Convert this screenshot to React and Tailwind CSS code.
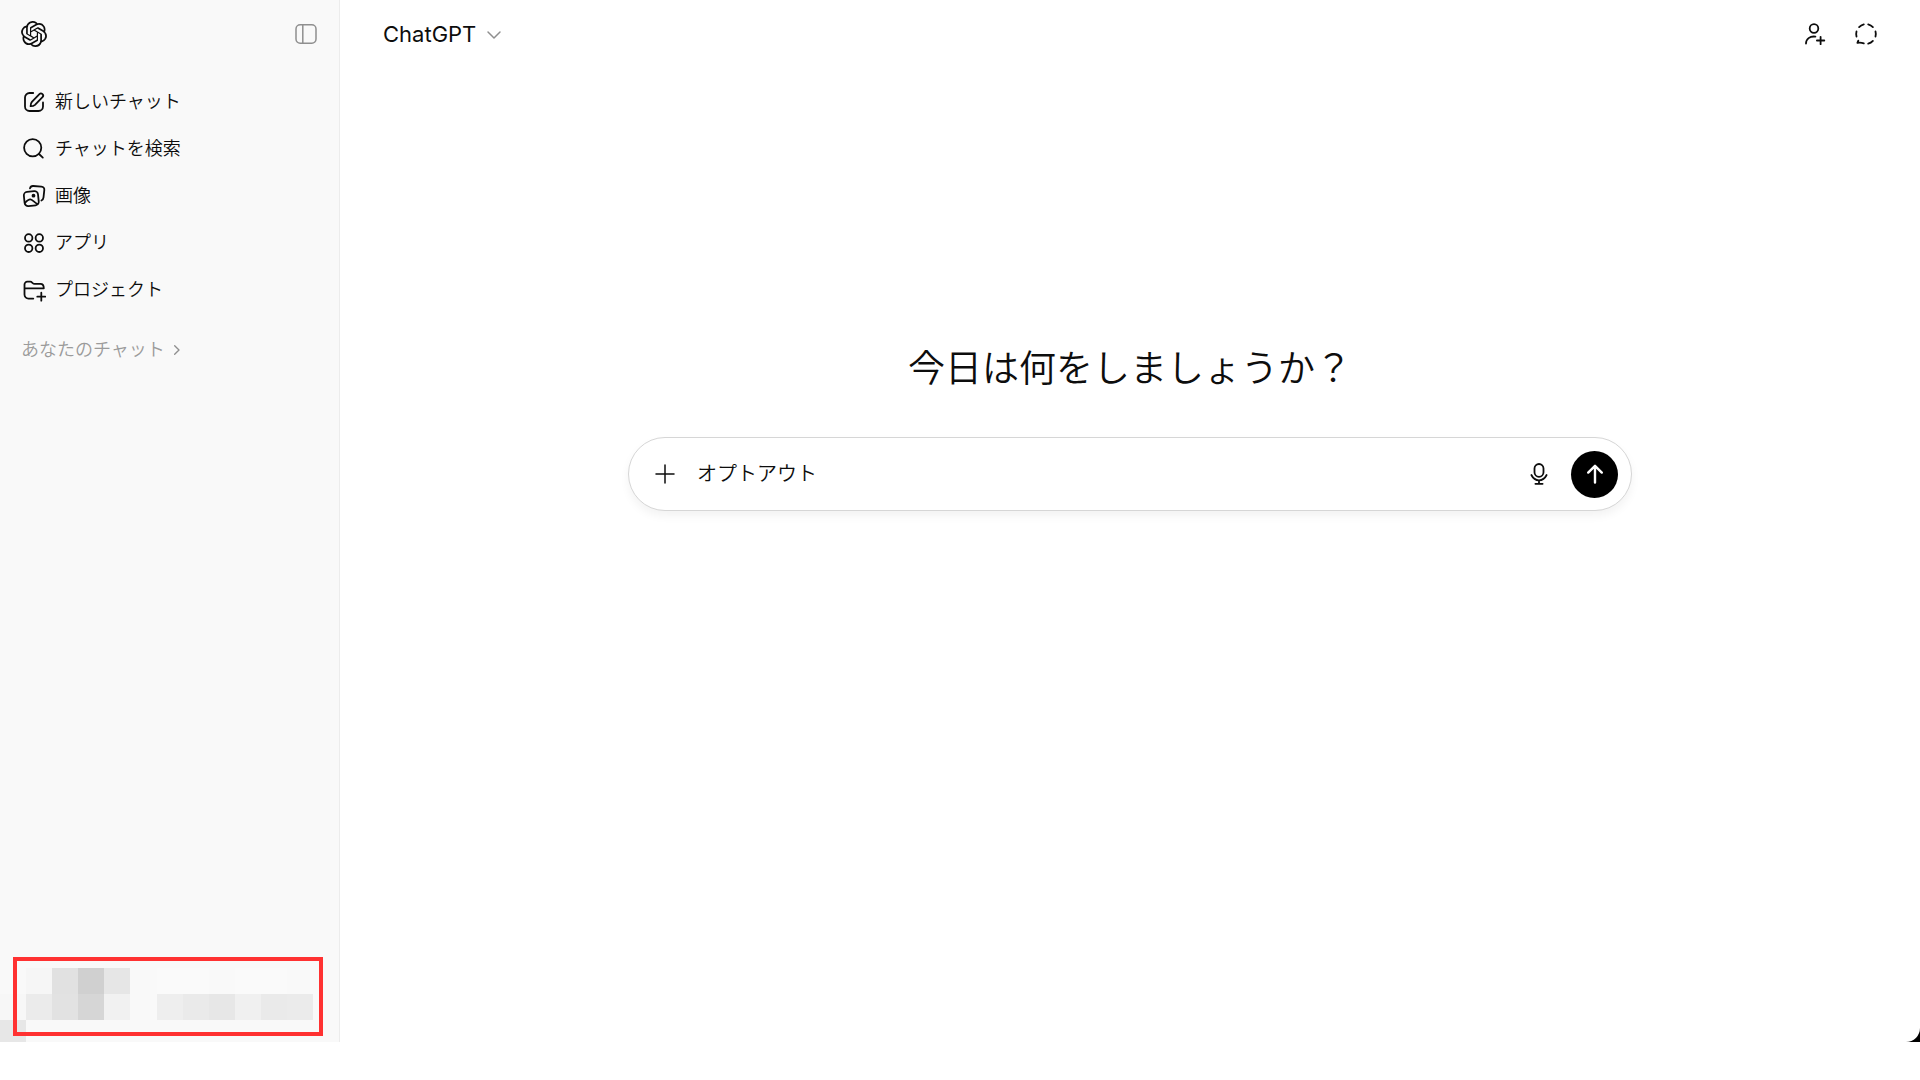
import React, { useState } from 'react';
import { SiOpenai } from 'react-icons/si';

const Icon = ({ children, className = 'size-6', strokeWidth = 1.8 }) => (
  <svg viewBox="0 0 24 24" className={`shrink-0 ${className}`} fill="none" stroke="currentColor" strokeWidth={strokeWidth} strokeLinecap="round" strokeLinejoin="round" aria-hidden="true">
    {children}
  </svg>
);

const navItems = [
  {
    label: '新しいチャット',
    icon: (
      <>
        <path d="M11.2 3H7.5A4.5 4.5 0 0 0 3 7.5V16.5A4.5 4.5 0 0 0 7.5 21H16.5A4.5 4.5 0 0 0 21 16.5V12.5" />
        <path d="M9.9 11.8 17.4 4.2A2.1 2.1 0 0 1 20.5 7.2L13 14.8C12 15.7 10.4 16.2 8.6 16.2C8.6 14.4 9 12.8 9.9 11.8Z" />
      </>
    )
  },
  {
    label: 'チャットを検索',
    icon: (
      <>
        <circle cx="10.7" cy="10.7" r="8.6" />
        <path d="M17 17 20.8 20.6" />
      </>
    )
  },
  {
    label: '画像',
    icon: (
      <>
        <rect x="2.2" y="7.5" width="14.2" height="14.2" rx="3.5" transform="rotate(-6 9.3 14.6)" />
        <path d="M8 4.4C8.4 2.6 9.6 1.9 11.2 2L19.4 2.7C21.6 2.9 22.5 4.2 22.3 6.2L21.5 13.3C21.3 15.2 20.6 16 19.4 16.5" />
        <path d="M3 18.8C4.7 17 6.6 15.2 8.4 15.4C10.4 15.6 12.6 18.5 15.4 20" />
        <circle cx="11.5" cy="11.7" r="1" fill="currentColor" />
      </>
    )
  },
  {
    label: 'アプリ',
    icon: (
      <>
        <circle cx="6.7" cy="6.9" r="3.7" />
        <circle cx="17.3" cy="6.9" r="3.7" />
        <circle cx="6.7" cy="17.3" r="3.7" />
        <circle cx="17.3" cy="17.3" r="3.7" />
      </>
    )
  },
  {
    label: 'プロジェクト',
    icon: (
      <>
        <path d="M11.3 20.6H6.5A4 4 0 0 1 2.5 16.6V6.5A2.8 2.8 0 0 1 5.3 3.7H8.2C10.3 3.7 10.5 5.9 12.6 5.9H18.5C20.5 5.9 21.8 7.3 21.8 10.3H2.5" />
        <path d="M19.3 14.7V22.7M15.3 18.7H23.3" />
      </>
    )
  }
];

// blurred-out account row, one entry per tile
const tiles = [
  'bg-[#f9f9f9]', 'bg-[#f6f6f6]', 'bg-[#e1e1e1]', 'bg-[#d0d0d0]', 'bg-[#e6e6e6]', 'bg-[#f9f9f9]', 'bg-[#fafafa]', 'bg-[#fafafa]', 'bg-[#f9f9f9]', 'bg-[#fafafa]', 'bg-[#fafafa]', 'bg-[#f9f9f9]',
  'bg-[#f7f7f7]', 'bg-[#ebebeb]', 'bg-[#e2e2e2]', 'bg-[#d6d6d6]', 'bg-[#f1f1f1]', 'bg-[#f9f9f9]', 'bg-[#eeeeee]', 'bg-[#eaeaea]', 'bg-[#e7e7e7]', 'bg-[#f0f0f0]', 'bg-[#eaeaea]', 'bg-[#ebebeb]'
];

const Sidebar = () => (
  <aside className="flex w-[340px] shrink-0 flex-col border-r border-[#ececec] bg-[#f9f9f9]">
    <div className="flex h-[68px] items-center justify-between px-5">
      <a href="#home" aria-label="ChatGPT">
        <SiOpenai className="size-7 p-px" />
      </a>
      <button type="button" aria-label="サイドバーを閉じる" className="cursor-pointer pr-px text-[#8f8f8f]">
        <Icon strokeWidth={1.5}>
          <rect x="2" y="2.8" width="20" height="18.4" rx="4.2" />
          <path d="M8.8 3V21" />
        </Icon>
      </button>
    </div>

    <nav className="flex flex-col pt-[10px]">
      {navItems.map((item) => (
        <a key={item.label} href="#chat" className="flex h-[47px] items-center gap-[9px] px-[22px] text-lg font-[350]">
          <Icon>{item.icon}</Icon>
          {item.label}
        </a>
      ))}
    </nav>

    <button type="button" className="mt-[13px] flex h-[47px] cursor-pointer items-center gap-1 px-[21px] text-lg font-[350] text-[#9b9b9b]">
      あなたのチャット
      <Icon className="size-4 text-[#8f8f8f]" strokeWidth={2}>
        <path d="M8.5 5.5 15 12 8.5 18.5" />
      </Icon>
    </button>

    {/* Account */}
    <div className="relative mt-auto">
      <div className="grid w-[313px] grid-cols-12">
        {tiles.map((tile, i) => (
          <div key={i} className={`h-[26px] ${tile}`} />
        ))}
      </div>
      <div className="h-[22px] w-[26px] bg-[#e7e7e7]" />
      <div className="absolute -top-[11px] bottom-[6px] left-[13px] right-4 border-4 border-[#ff3131]" />
    </div>
  </aside>
);

const Composer = () => {
  const [prompt, setPrompt] = useState('オプトアウト');

  return (
    <form onSubmit={(e) => e.preventDefault()} className="flex h-[74px] w-full max-w-[1004px] items-center rounded-full border border-[#d6d6d6] bg-white pl-6 pr-[13px] shadow-[0_5px_10px_rgba(0,0,0,0.05)]">
      <button type="button" aria-label="追加" className="cursor-pointer">
        <Icon strokeWidth={1.5}>
          <path d="M12 3V21M3 12H21" />
        </Icon>
      </button>
      <input type="text" aria-label="メッセージ" value={prompt} onChange={(e) => setPrompt(e.target.value)} className="ml-5 min-w-0 flex-1 text-xl font-[350] outline-none" />
      <button type="button" aria-label="音声入力" className="mr-5 cursor-pointer">
        <Icon>
          <rect x="7.5" y="2" width="9" height="12.8" rx="4.5" />
          <path d="M4.4 13C6 16.3 8.6 18.3 12 18.3S18 16.3 19.6 13M12 18.3V21.8M8.4 21.8H15.6" />
        </Icon>
      </button>
      <button type="submit" aria-label="送信" className="flex size-[47px] cursor-pointer items-center justify-center rounded-full bg-black text-white">
        <Icon strokeWidth={2.4}>
          <path d="M12 20.5V4M5.2 10.6 12 3.8 18.8 10.6" />
        </Icon>
      </button>
    </form>
  );
};

const App = () => {
  return (
    <div className="flex min-h-screen flex-col bg-white pb-[38px] font-['Inter','Noto_Sans_CJK_JP',sans-serif] text-[#0d0d0d]">
      <div className="flex flex-1 bg-black">
        <Sidebar />

        <main className="flex min-w-0 flex-1 flex-col rounded-br-[14px] bg-white">
          <header className="flex h-[68px] items-center justify-between pl-[43px] pr-[42px]">
            <button type="button" className="flex cursor-pointer items-center gap-[10px] text-[22px]">
              ChatGPT
              <Icon className="mt-0.5 size-4 text-[#8f8f8f]" strokeWidth={2.2}>
                <path d="M3 7.5 12 16.5 21 7.5" />
              </Icon>
            </button>
            <div className="flex items-center gap-7">
              <button type="button" aria-label="グループチャットを開始" className="cursor-pointer">
                <Icon>
                  <circle cx="12" cy="6.5" r="4.3" />
                  <path d="M4 21.6C4 17 7.8 13.9 13.4 14.6M18.6 14.8V22.2M14.9 18.5H22.3" />
                </Icon>
              </button>
              <button type="button" aria-label="一時チャット" className="cursor-pointer">
                <Icon>
                  <path d="M14.2 2.3A9.8 9.8 0 0 1 18.9 5.1M21.5 9.4A9.8 9.8 0 0 1 21.5 14.6M18.9 18.9A9.8 9.8 0 0 1 14.2 21.7M2.5 14.6A9.8 9.8 0 0 1 2.5 9.4M5.1 5.1A9.8 9.8 0 0 1 9.8 2.3M4.3 18.6 3.4 20.9C5.6 20.4 7.7 20.6 9.8 21.4" />
                </Icon>
              </button>
            </div>
          </header>

          <section className="flex flex-col items-center px-6 pt-[274px]">
            <h1 className="mb-[41px] text-[37px] leading-[54px] font-[350]">今日は何をしましょうか？</h1>
            <Composer />
          </section>
        </main>
      </div>
    </div>
  );
};

export default App;
